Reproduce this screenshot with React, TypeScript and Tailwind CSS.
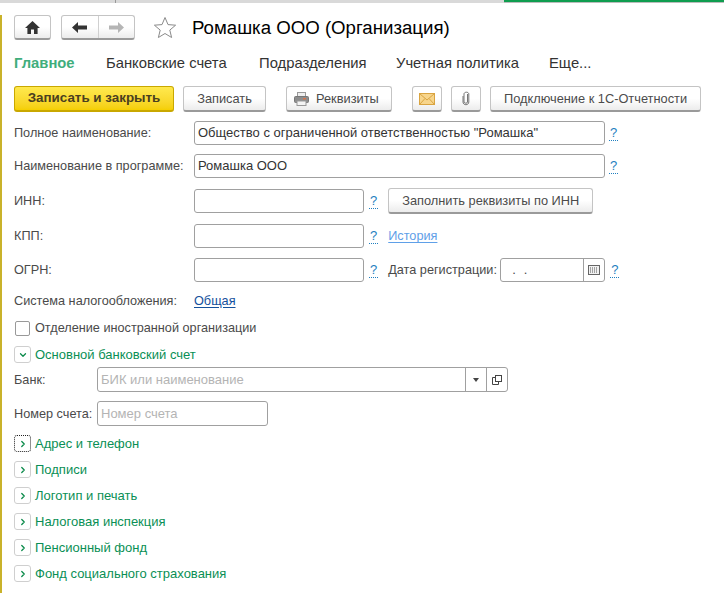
import { ChevronDown, ChevronRight } from "lucide-react";
import type { ReactNode } from "react";

const font = "font-['Liberation_Sans',Arial,sans-serif]";
const btn =
  "flex items-center justify-center rounded-[3px] border border-[#c4c4c4] border-b-[#9a9a9a] border-b-2 bg-gradient-to-b from-white via-white to-[#ececec] text-[12.8px] text-[#4b4b4b] whitespace-nowrap";
const field = "h-[24px] rounded-[3px] border border-[#a0a0a0] bg-white text-[13px] text-[#333]";

function Help({ className = "" }: { className?: string }) {
  return (
    <span className={"text-[13px] leading-[14px] text-[#1f7fc0] border-b border-dotted border-[#1f7fc0] px-px " + className}>?</span>
  );
}

function Label({ children, className = "w-[180px]" }: { children: ReactNode; className?: string }) {
  return <span className={"pt-[2px] text-[12.7px] text-[#4a4a4a] whitespace-nowrap " + className}>{children}</span>;
}

function Section({ title, open, focus }: { title: string; open?: boolean; focus?: boolean }) {
  return (
    <div className="flex items-center h-[17px]">
      <span
        className={
          "flex items-center justify-center w-[17px] h-[17px] rounded-[3px] border text-[#0a8a4a] " +
          (focus ? "border-dotted border-[#222]" : "border-[#cfcfcf]")
        }
      >
        {open ? <ChevronDown size={10} strokeWidth={3} /> : <ChevronRight size={10} strokeWidth={3} />}
      </span>
      <span className="ml-[4px] text-[13px] text-[#0a8f55] whitespace-nowrap">{title}</span>
    </div>
  );
}

export default function App() {
  return (
    <div className={font + " relative w-[724px] h-[593px] overflow-hidden bg-white"}>
      {/* window top strip */}
      <div className="flex h-[3px]">
        <div className="w-[116px] bg-[#d9d9d9] border-r border-[#999]" />
        <div className="w-[388px] bg-[#d9d9d9]" />
        <div className="flex-1 bg-[#0f9d4f] border-b border-[#bbb]" />
      </div>

      <div className="border-l-2 border-[#c9b22a] h-[590px] pl-[12px]">
        {/* header */}
        <div className="flex items-center mt-[12px] h-[25px]">
          <div className={btn + " w-[37px] h-[25px] border-[#a9a9a9]"}>
            <svg width="15" height="13" viewBox="0 0 15 13" fill="#333">
              <path d="M7.5 0 L15 7 L12.6 7 L12.6 13 L9 13 L9 8.5 L6 8.5 L6 13 L2.4 13 L2.4 7 L0 7 Z" />
            </svg>
          </div>
          <div className={btn + " ml-[10px] w-[74px] h-[25px] border-[#a9a9a9] !justify-start"}>
            <span className="flex items-center justify-center w-[37px] h-full border-r border-[#d0d0d0]">
              <svg width="15" height="11" viewBox="0 0 15 11" fill="#333">
                <path d="M0 5.5 L6 0 L6 3.5 L15 3.5 L15 7.5 L6 7.5 L6 11 Z" />
              </svg>
            </span>
            <span className="flex items-center justify-center w-[36px] h-full">
              <svg width="15" height="11" viewBox="0 0 15 11" fill="#b5b5b5">
                <path d="M15 5.5 L9 0 L9 3.5 L0 3.5 L0 7.5 L9 7.5 L9 11 Z" />
              </svg>
            </span>
          </div>
          <svg className="ml-[18px]" width="24" height="23" viewBox="0 0 24 23" fill="none" stroke="#8a8a8a">
            <path d="M12 1.5 L15 8.6 L22.6 9.2 L16.8 14.1 L18.6 21.5 L12 17.5 L5.4 21.5 L7.2 14.1 L1.4 9.2 L9 8.6 Z" />
          </svg>
          <span className="ml-[15px] text-[18.65px] text-black whitespace-nowrap">Ромашка ООО (Организация)</span>
        </div>

        {/* tabs */}
        <div className="flex items-center mt-[13px] h-[20px] text-[14.8px] text-[#333] whitespace-nowrap">
          <span className="w-[92px] font-bold text-[#3fae7c]">Главное</span>
          <span className="w-[153px]">Банковские счета</span>
          <span className="w-[137px]">Подразделения</span>
          <span className="w-[153px]">Учетная политика</span>
          <span>Еще...</span>
        </div>

        {/* command bar */}
        <div className="flex items-center mt-[13px] h-[26px]">
          <div className="flex items-center justify-center w-[160px] h-[26px] rounded-[3px] border border-[#c9a800] border-b-2 bg-gradient-to-b from-[#ffe94d] to-[#f5cf00] text-[13.4px] font-bold text-[#4a4020] whitespace-nowrap">
            Записать и закрыть
          </div>
          <div className={btn + " ml-[9px] w-[83px] h-[26px]"}>Записать</div>
          <div className={btn + " ml-[20px] w-[106px] h-[26px] !justify-start pl-[7px]"}>
            <svg className="mr-[7px]" width="15" height="14" viewBox="0 0 15 14">
              <rect x="3.5" y="0.5" width="8" height="5" fill="#eee" stroke="#999" />
              <rect x="0.5" y="4.5" width="14" height="6" rx="1" fill="#8d8d8d" stroke="#777" />
              <rect x="9" y="6" width="3" height="1.5" fill="#d8734a" />
              <rect x="3" y="9" width="9" height="4.5" fill="#f4f4f4" stroke="#999" />
            </svg>
            Реквизиты
          </div>
          <div className={btn + " ml-[20px] w-[30px] h-[26px]"}>
            <svg width="16" height="12" viewBox="0 0 16 12">
              <rect x="0.5" y="0.5" width="15" height="11" fill="#f7d58c" stroke="#d9a441" />
              <path d="M0.5 0.5 L8 7 L15.5 0.5 M0.5 11.5 L6 5.5 M15.5 11.5 L10 5.5" fill="none" stroke="#d9a441" />
            </svg>
          </div>
          <div className={btn + " ml-[9px] w-[30px] h-[26px]"}>
            <svg width="8" height="15" viewBox="0 0 8 15" fill="none" stroke="#666" strokeWidth="0.9">
              <path d="M5.5 3 L5.5 11 C5.5 12.6 2 12.6 2 11 L2 3 C2 0.6 6.8 0.6 6.8 3 L6.8 11 C6.8 14.6 1 14.6 1 11 L1 5" />
            </svg>
          </div>
          <div className={btn + " ml-[9px] w-[211px] h-[26px]"}>Подключение к 1С-Отчетности</div>
        </div>

        {/* requisites */}
        <div className="flex items-center mt-[9px] h-[24px]">
          <Label>Полное наименование:</Label>
          <div className={field + " w-[411px] flex items-center pl-[3px] whitespace-nowrap"}>
            Общество с ограниченной ответственностью "Ромашка"
          </div>
          <Help className="ml-[4px]" />
        </div>
        <div className="flex items-center mt-[9px] h-[24px]">
          <Label>Наименование в программе:</Label>
          <div className={field + " w-[411px] flex items-center pl-[3px]"}>Ромашка ООО</div>
          <Help className="ml-[4px]" />
        </div>
        <div className="flex items-center mt-[11px] h-[24px]">
          <Label>ИНН:</Label>
          <div className={field + " w-[170px]"} />
          <Help className="ml-[5px]" />
          <div className={btn + " ml-[10px] w-[205px] h-[26px]"}>Заполнить реквизиты по ИНН</div>
        </div>
        <div className="flex items-center mt-[11px] h-[24px]">
          <Label>КПП:</Label>
          <div className={field + " w-[170px]"} />
          <Help className="ml-[5px]" />
          <span className="ml-[10px] pt-[2px] text-[12.7px] text-[#5fa0e8] underline underline-offset-2">История</span>
        </div>
        <div className="flex items-center mt-[10px] h-[24px]">
          <Label>ОГРН:</Label>
          <div className={field + " w-[170px]"} />
          <Help className="ml-[5px]" />
          <Label className="ml-[10px] w-[112px]">Дата регистрации:</Label>
          <div className={field + " w-[105px] flex items-center"}>
            <span className="w-[82px] pl-[11px] text-[#4a4a4a] tracking-[8px]">..</span>
            <span className="flex-1 h-full flex items-center justify-center border-l border-[#a0a0a0]">
              <svg width="12" height="10" viewBox="0 0 12 10">
                <rect x="0.5" y="0.5" width="11" height="9" fill="#f2f2f2" stroke="#666" />
                <path d="M2 3h8M2 5h8M2 7h8" stroke="#555" strokeDasharray="1 1" />
              </svg>
            </span>
          </div>
          <Help className="ml-[5px]" />
        </div>

        <div className="flex items-center mt-[10px] h-[17px]">
          <Label>Система налогообложения:</Label>
          <span className="pt-[2px] text-[12.7px] text-[#15519c] underline underline-offset-2">Общая</span>
        </div>

        <div className="flex items-center mt-[11px] h-[16px]">
          <span className="ml-px w-[15px] h-[15px] rounded-[2px] border border-[#999] bg-white" />
          <span className="ml-[5px] pt-[2px] text-[12.7px] text-[#4a4a4a] whitespace-nowrap">Отделение иностранной организации</span>
        </div>

        <div className="mt-[10px]">
          <Section title="Основной банковский счет" open />
        </div>

        <div className="flex items-center mt-[4px] h-[25px]">
          <Label className="w-[83px]">Банк:</Label>
          <div className={field + " !h-[25px] w-[411px] flex items-center pl-[3px]"}>
            <span className="flex-1 text-[#b4b4b4]">БИК или наименование</span>
            <span className="flex items-center justify-center w-[21px] h-full border-l border-[#a0a0a0]">
              <svg width="6" height="4" viewBox="0 0 6 4" fill="#444"><path d="M0 0h6L3 4z" /></svg>
            </span>
            <span className="flex items-center justify-center w-[21px] h-full border-l border-[#a0a0a0]">
              <svg width="10" height="10" viewBox="0 0 10 10" fill="none" stroke="#444">
                <rect x="3.5" y="0.5" width="6" height="6" />
                <path d="M3.5 2.5H0.5V9.5H6.5V6.5" />
              </svg>
            </span>
          </div>
        </div>
        <div className="flex items-center mt-[9px] h-[25px]">
          <Label className="w-[83px]">Номер счета:</Label>
          <div className={field + " !h-[25px] w-[171px] flex items-center pl-[3px] text-[#b4b4b4]"}>Номер счета</div>
        </div>

        {/* collapsed sections */}
        <div className="flex flex-col gap-[9px] mt-[9px]">
          <Section title="Адрес и телефон" focus />
          <Section title="Подписи" />
          <Section title="Логотип и печать" />
          <Section title="Налоговая инспекция" />
          <Section title="Пенсионный фонд" />
          <Section title="Фонд социального страхования" />
        </div>
      </div>
    </div>
  );
}
